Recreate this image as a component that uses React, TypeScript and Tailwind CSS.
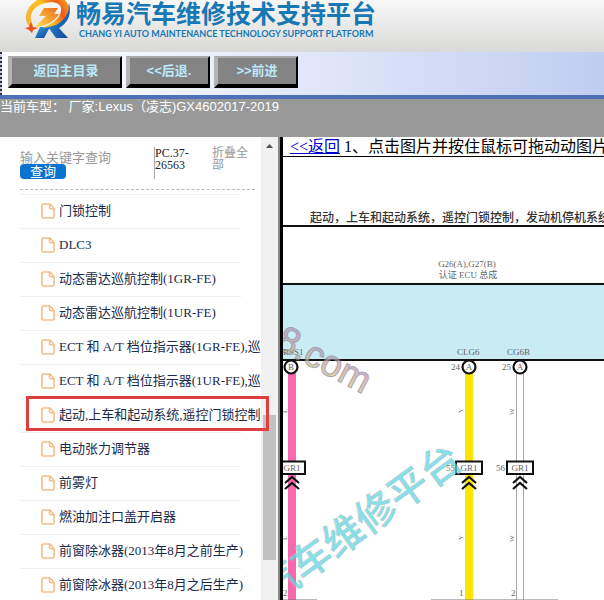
import React, { useState } from 'react';

const menuItems = [
  '门锁控制',
  'DLC3',
  '动态雷达巡航控制(1GR-FE)',
  '动态雷达巡航控制(1UR-FE)',
  'ECT 和 A/T 档位指示器(1GR-FE),巡',
  'ECT 和 A/T 档位指示器(1UR-FE),巡',
  '起动,上车和起动系统,遥控门锁控制',
  '电动张力调节器',
  '前雾灯',
  '燃油加注口盖开启器',
  '前窗除冰器(2013年8月之前生产)',
  '前窗除冰器(2013年8月之后生产)',
];

const Logo = () => (
  <svg viewBox="0 0 50 42" className="h-[42px] w-[50px] shrink-0" aria-hidden="true">
    <defs>
      <linearGradient id="ring" x1="0" y1="0.6" x2="1" y2="0.2">
        <stop offset="0" stopColor="#f9b233" />
        <stop offset="0.45" stopColor="#fcc21c" />
        <stop offset="0.75" stopColor="#ee5a1c" />
        <stop offset="1" stopColor="#f7a11a" />
      </linearGradient>
      <linearGradient id="bolt" x1="0" y1="1" x2="1" y2="0">
        <stop offset="0" stopColor="#fde04a" />
        <stop offset="1" stopColor="#ee6a1c" />
      </linearGradient>
      <linearGradient id="leg" x1="0" y1="0" x2="1" y2="1">
        <stop offset="0" stopColor="#2f9fe0" />
        <stop offset="1" stopColor="#123f98" />
      </linearGradient>
    </defs>
    <path d="M18 27h10l-6 11H13z" fill="url(#leg)" />
    <path d="M47 3c3 11-1 20-10 25l9 10H34l-8-11c11-3 19-11 21-24z" fill="url(#leg)" />
    <path
      d="M8 27C1 21 3 8 14 1L18-3h20c9 4 11 12 6 19-5 8-13 11-24 12 10-4 18-9 19-17C40 3 32 1 24 3 12 5 5 15 11 25z"
      fill="url(#ring)"
    />
    <path d="M22 8h14l-4 6h5c-4 7-12 12-24 13l11-11h-7z" fill="url(#bolt)" />
    <path d="M9 22l2 5 5 1-5 2-1 3-3-3-4-2 4-1z" fill="#e8501c" />
  </svg>
);

const FileIcon = () => (
  <svg viewBox="0 0 14 16" className="h-4 w-[14px] shrink-0" fill="none" stroke="#f5bd88" strokeWidth="1.6" aria-hidden="true">
    <path d="M2.500 1H9l4 4.500v8.200c0 .8-.5 1.300-1.300 1.300H2.300C1.500 15 1 14.500 1 13.700V2.300C1 1.500 1.600 1 2.500 1z" />
    <path d="M8.500 1v3.600c0 .8.4 1.200 1.200 1.200H13" />
  </svg>
);

const ToolButton = ({ children, wide }: { children: React.ReactNode; wide?: boolean }) => (
  <button
    className={`${wide ? 'w-[114px]' : 'w-[84px]'} h-8 border-t-2 border-r-2 border-b-4 border-l-4 border-t-[#a8a8a8] border-r-black border-b-black border-l-[#b4b4b4] bg-[#848484] text-[13px] leading-4 font-bold text-[#b9e9f8]`}
  >
    {children}
  </button>
);

// Connector box with the double arrow under it
const Connector = ({ x }: { x: number }) => (
  <g>
    <path d={`M${x - 7} 326l7-6 7 6M${x - 7} 332l7-6 7 6`} fill="none" stroke="#111" strokeWidth="2.2" />
    <rect x={x - 13} y="304.500" width="26" height="12.500" fill="#fff" stroke="#111" strokeWidth="2" />
    <text x={x} y="314" textAnchor="middle">GR1</text>
  </g>
);

const Pin = ({ x, label }: { x: number; label: string }) => (
  <g>
    <circle cx={x} cy="210" r="6.500" fill="#fff" stroke="#111" strokeWidth="2.200" />
    <text x={x} y="213" textAnchor="middle">{label}</text>
  </g>
);

const WiringDiagram = () => (
  <svg
    width="900"
    height="700"
    viewBox="0 0 900 700"
    className="max-w-none shrink-0 font-['Liberation_Serif','Noto_Sans_CJK_SC',serif] text-[9px]"
    fill="#666"
  >
    <defs>
      <linearGradient id="mark" x1="0" y1="0" x2="0" y2="1">
        <stop offset="0.3" stopColor="#b79ac8" />
        <stop offset="0.6" stopColor="#dba98c" />
        <stop offset="0.8" stopColor="#c9cf7a" />
      </linearGradient>
    </defs>
    <text x="27" y="65" className="text-[12px] font-medium" fill="#333">
      起动，上车和起动系统，遥控门锁控制，发动机停机系统
    </text>
    <path d="M0 69h900" stroke="#111" strokeWidth="2" />
    <text x="184" y="110" textAnchor="middle">G26(A),G27(B)</text>
    <text x="185" y="121" textAnchor="middle">认证 ECU 总成</text>
    <rect y="127" width="900" height="76" fill="#c9ebf2" />
    <path d="M0 127h900M0 203h900" stroke="#111" strokeWidth="2.200" />
    <text x="0" y="198">RSS1</text>
    <text x="174" y="198">CLG6</text>
    <text x="224" y="198">CG6B</text>

    <path d="M9 216v484" stroke="#f768ae" strokeWidth="8" />
    <path d="M186 216v484" stroke="#ffe600" strokeWidth="8" />
    <path d="M233.500 216v484M240.500 216v484" stroke="#aaa" />
    <Pin x={8} label="B" />
    <Pin x={186} label="A" />
    <Pin x={237} label="A" />
    <text x="168" y="213">24</text>
    <text x="219" y="213">25</text>
    <Connector x={9} />
    <Connector x={186} />
    <Connector x={237} />
    <text x="163" y="314">55</text>
    <text x="213" y="314">56</text>

    <g className="text-[7px]">
      <text transform="translate(4 256) rotate(-90)">L</text>
      <text transform="translate(180 256) rotate(-90)">Y</text>
      <text transform="translate(231 258) rotate(-90)">W</text>
      <text transform="translate(4 383) rotate(-90)">L</text>
      <text transform="translate(180 383) rotate(-90)">Y</text>
      <text transform="translate(231 385) rotate(-90)">W</text>
    </g>
    <text x="0" y="439">2</text>
    <text x="176" y="439">1</text>
    <text x="228" y="439">2</text>
    <path d="M0 443h34M148 443h127" stroke="#777" />

    <text
      transform="translate(-9 190) rotate(28)"
      className="font-['Liberation_Sans',sans-serif] text-[37px]"
      fill="url(#mark)"
      stroke="#8f8798"
      strokeWidth="1.2"
      opacity="0.700"
    >
      8.com
    </text>
    <text
      transform="translate(-12 449) rotate(-36)"
      className="font-['Noto_Sans_CJK_SC',sans-serif] text-[40px] font-medium"
      fill="#5fd6e0"
      stroke="#9fb4b8"
      strokeWidth="0.500"
      opacity="0.750"
    >
      汽车维修平台
    </text>
  </svg>
);

const App: React.FC = () => {
  const [selected, setSelected] = useState(6);

  return (
    <div className="flex h-screen flex-col overflow-hidden bg-white font-['Liberation_Serif','Noto_Sans_CJK_SC',serif]">
      <header className="flex h-[52px] shrink-0 gap-1 overflow-hidden bg-linear-to-b from-[#f8f8f8] to-[#d9dad8] pl-[22px] font-['Liberation_Sans','Noto_Sans_CJK_SC',sans-serif] font-bold whitespace-nowrap text-[#1878b4]">
        <Logo />
        <div>
          <h1 className="text-[25px] leading-7">畅易汽车维修技术支持平台</h1>
          <p className="pl-[3px] font-['Lato',sans-serif] text-[9px] leading-3">CHANG YI AUTO MAINTENANCE TECHNOLOGY SUPPORT PLATFORM</p>
        </div>
      </header>

      <div className="shrink-0 border-b-4 border-[#4f70b8]">
        <nav className="flex h-[43px] gap-1 border-l-2 border-dotted border-[#333] bg-linear-to-r from-white via-[#e2e8fa] to-[#bfcdf0] pt-1 pl-[6px] font-['Liberation_Sans','Noto_Sans_CJK_SC',sans-serif]">
          <ToolButton wide>返回主目录</ToolButton>
          <ToolButton>&lt;&lt;后退.</ToolButton>
          <ToolButton>&gt;&gt;前进</ToolButton>
        </nav>
      </div>

      <p className="h-[38px] shrink-0 bg-[#999] font-['Liberation_Sans','Noto_Sans_CJK_SC',sans-serif] text-[13px] leading-4 whitespace-nowrap text-white">
        当前车型： 厂家:Lexus（凌志)GX4602017-2019
      </p>

      <div className="flex min-h-0 flex-1">
        <aside className="flex w-[278px] shrink-0">
          <div className="min-w-0 flex-1 pl-5">
            <form className="mr-[6px] flex h-[53px] border-b border-dashed border-[#bbb] pt-[10px]" onSubmit={(e) => e.preventDefault()}>
              <div className="w-[134px]">
                <input
                  aria-label="输入关键字查询"
                  placeholder="输入关键字查询"
                  className="block h-[17px] w-[130px] pt-1 text-[13px] leading-4 outline-none placeholder:text-[#999]"
                />
                <button className="block h-[15px] w-[46px] rounded bg-[#0a73d0] text-[13px] leading-[15px] text-white">查询</button>
              </div>
              <span className="h-8 w-[58px] border-l border-[#aaa] text-[12px] leading-3 text-[#222]">
                PC.37-
                <br />
                26563
              </span>
              <a href="#" className="w-[38px] text-[12px] leading-3 text-[#999]">
                折叠全部
              </a>
            </form>
            <ul className="mt-1">
              {menuItems.map((item, index) => (
                <li key={item} className="relative">
                  <button
                    onClick={() => setSelected(index)}
                    className="flex h-[34px] w-full items-center gap-1 pl-[21px] text-[13px] leading-4 whitespace-nowrap text-[#1c2a4a]"
                  >
                    <FileIcon />
                    {item}
                  </button>
                  <div className="absolute top-0 left-0 h-px w-[221px] bg-[#eee]" />
                  {selected === index && (
                    <div className="pointer-events-none absolute -top-[2px] -right-2 bottom-px left-[6px] z-10 border-3 border-[#e23d3d]" />
                  )}
                </li>
              ))}
            </ul>
          </div>
          <div className="flex w-[17px] flex-col items-center bg-[#f1f1f1]">
            <svg viewBox="0 0 7 4" className="mt-[7px] h-1 w-[7px] shrink-0" fill="#505050" aria-hidden="true">
              <path d="M0 4l3.500-4L7 4z" />
            </svg>
            <div className="mt-[267px] h-[145px] w-[13px] shrink-0 bg-[#c1c1c1]" />
          </div>
        </aside>

        <main className="flex min-w-0 flex-1 flex-col overflow-hidden border-l-2 border-[#888]">
          <div className="flex flex-1 flex-col overflow-hidden border-l-3 border-black">
            <p className="h-[19px] shrink-0 pl-[7px] text-[16px] leading-[19px] whitespace-nowrap text-black">
              <a href="#" className="text-[#0000cc] underline">&lt;&lt;返回</a> 1、点击图片并按住鼠标可拖动动图片
            </p>
            <div className="min-h-0 flex-1 overflow-hidden border-t border-black">
              <WiringDiagram />
            </div>
          </div>
        </main>
      </div>
    </div>
  );
};

export default App;
